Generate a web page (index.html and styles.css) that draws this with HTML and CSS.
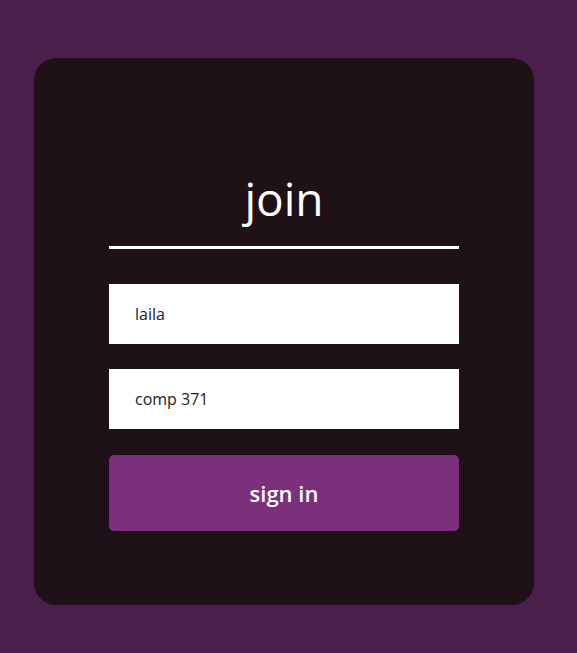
FILE: index.html
```html
<!DOCTYPE html>
<html>
<head>
<meta charset="utf-8">
<link rel="stylesheet" href="styles.css">
</head>
<body>
<div class="page">
  <form class="card">
    <h1 class="title">join</h1>
    <div class="rule"></div>
    <div class="field">laila</div>
    <div class="field">comp 371</div>
    <button class="btn" type="button">sign in</button>
  </form>
</div>
</body>
</html>
```
FILE: styles.css
```css
html, body { margin: 0; padding: 0; }
body {
  background: #4b1f4b;
  font-family: "Open Sans", "Noto Sans", sans-serif;
  width: 577px;
  height: 653px;
  overflow: hidden;
}
.page { padding: 58px 0 0 34px; }
.card {
  box-sizing: border-box;
  width: 500px;
  height: 547px;
  background: #1e1118;
  border-radius: 22px;
  padding: 110px 75px 0 75px;
  display: flex;
  flex-direction: column;
}
.title {
  margin: 0;
  text-align: center;
  color: #fff;
  font-weight: 400;
  font-size: 46px;
  line-height: 60px;
}
.rule {
  height: 3px;
  background: #fff;
  margin-top: 18px;
}
.field {
  margin-top: 35px;
  height: 60px;
  background: #fff;
  color: #222;
  font-size: 16px;
  line-height: 60px;
  padding-left: 26px;
}
.field + .field { margin-top: 25px; }
.btn {
  margin-top: 26px;
  height: 76px;
  border: none;
  border-radius: 5px;
  background: #7c2f7b;
  color: #fff;
  font-family: inherit;
  font-weight: 600;
  font-size: 22px;
  padding: 0;
}
```
